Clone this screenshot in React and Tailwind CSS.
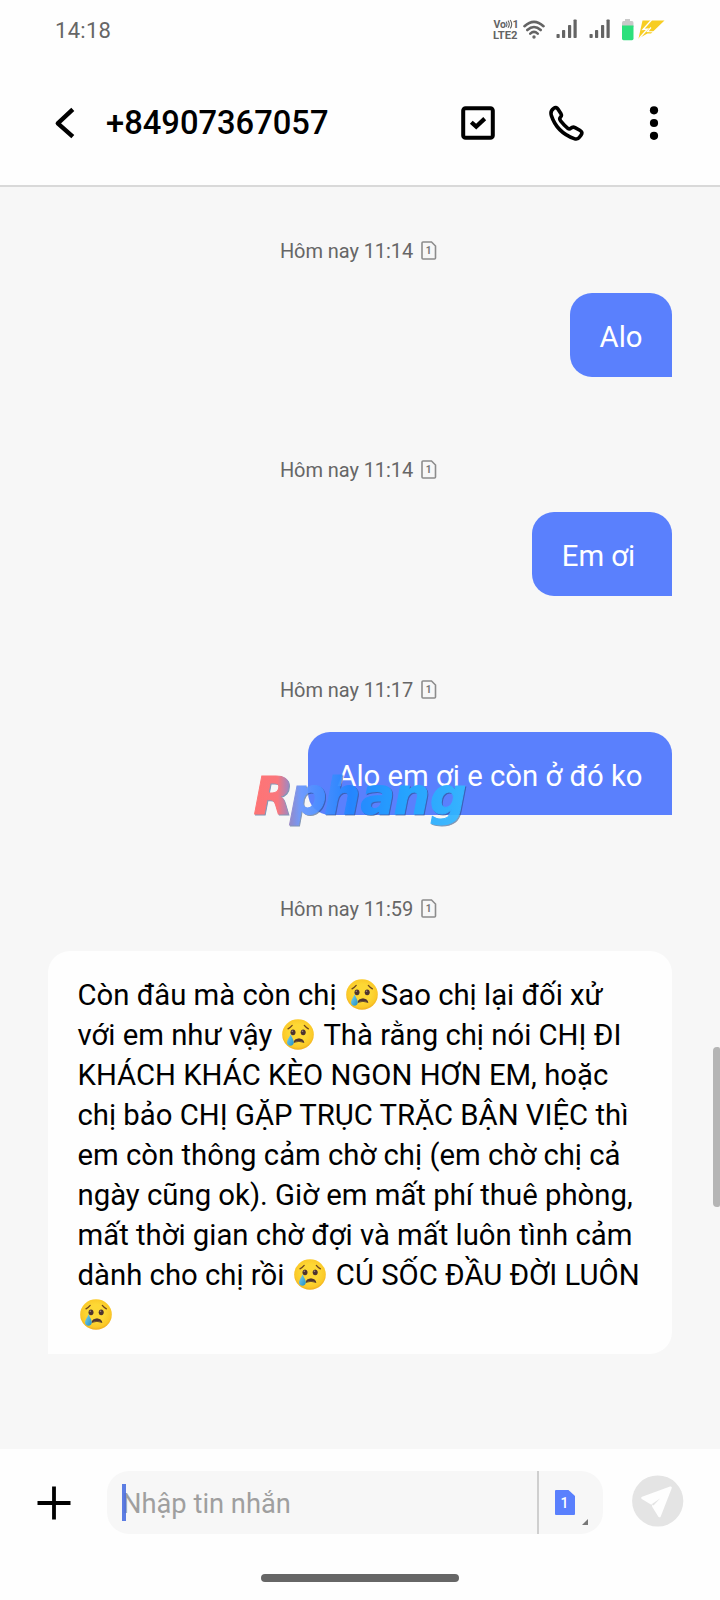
import React from 'react';

const messages = [
  { time: 'Hôm nay 11:14', text: 'Alo' },
  { time: 'Hôm nay 11:14', text: 'Em ơi ' },
  { time: 'Hôm nay 11:17', text: 'Alo em ơi e còn ở đó ko' },
];

const CryingFace = () => (
  <svg className="inline-block w-8 h-[31px] mx-[2.5px] align-[-5px]" viewBox="0 0 32 31" role="img" aria-label="😢">
    <defs>
      <radialGradient id="face" cx="0.5" cy="0.45" r="0.55">
        <stop offset="0.5" stopColor="#fdd835" />
        <stop offset="0.85" stopColor="#fbc928" />
        <stop offset="1" stopColor="#f0ad1c" />
      </radialGradient>
      <linearGradient id="tear" x1="0" y1="0" x2="1" y2="1">
        <stop offset="0" stopColor="#7fd4f2" />
        <stop offset="1" stopColor="#1f8fc4" />
      </linearGradient>
    </defs>
    <ellipse cx="16" cy="15.5" rx="15.8" ry="15.3" fill="url(#face)" />
    <ellipse cx="11" cy="13.3" rx="2.5" ry="2.9" fill="#4e342e" />
    <ellipse cx="21.2" cy="13.3" rx="2.5" ry="2.9" fill="#4e342e" />
    <circle cx="10.3" cy="12.2" r="0.8" fill="#a1887f" />
    <circle cx="20.5" cy="12.2" r="0.8" fill="#a1887f" />
    <path d="M6 9.8 Q8.5 8.6 10.2 6.4 M22.3 6.4 Q24 8.6 26.4 9.8" fill="none" stroke="#6d4520" strokeWidth="1.3" strokeLinecap="round" />
    <path d="M11.8 23.4 Q12.5 19.8 17 19.8 Q21.2 19.8 22 23.4 Q17 21.3 11.8 23.4Z" fill="#4e342e" stroke="#4e342e" strokeWidth="0.8" strokeLinejoin="round" />
    <path d="M8.6 15.2 C7.5 18.4 5 20.6 5 23.3 C5 25.5 6.4 26.8 8.4 26.8 C10.4 26.8 11.8 25.5 11.8 23.3 C11.8 20.6 9.8 18.4 8.6 15.2Z" fill="url(#tear)" />
  </svg>
);

const SimOutline = () => (
  <svg className="w-4 h-[19px] -mt-px" viewBox="0 0 16 19">
    <path d="M2 1 H10.5 L14.5 5 V17 Q14.5 18 13.5 18 H2 Q1 18 1 17 V2 Q1 1 2 1Z" fill="none" stroke="#8c8c8c" strokeWidth="1.6" />
    <text x="7.6" y="13" textAnchor="middle" fontSize="10" fontWeight="700" fill="#777">1</text>
  </svg>
);

const Timestamp = ({ children }) => (
  <div className="flex items-center justify-center h-7 gap-2 pr-[3px] text-[20px] text-[#666]">
    <span className="tracking-[-0.08px]">{children}</span>
    <SimOutline />
  </div>
);

const Signal = () => (
  <svg className="w-[22px] h-[20px]" viewBox="0 0 22 20" fill="#646464">
    <rect x="0.5" y="15" width="3.2" height="4" rx="0.8" />
    <rect x="6" y="11" width="3.2" height="8" rx="0.8" />
    <rect x="12" y="6" width="3.2" height="13" rx="0.8" />
    <rect x="17.5" y="0.5" width="3.2" height="18.5" rx="0.8" />
  </svg>
);

const StatusBar = () => (
  <div className="flex items-center justify-between h-[60px] pl-[55px] pr-[55px]">
    <span className="text-[22px] text-[#666] tracking-[0.3px]">14:18</span>
    <div className="flex items-center">
      <svg className="w-[26px] h-6 overflow-visible" viewBox="0 0 26 24" fill="#646464" fontWeight="700">
        <text x="0.5" y="9.8" fontSize="10.5" textLength="12.5">Vo</text>
        <path d="M13 3.7 Q15 6.2 13 9 M15 2.7 Q17.6 6.2 15 9.8 M17.2 2 Q20.2 6.2 17.2 10.4" fill="none" stroke="#646464" strokeWidth="1.1" />
        <text x="19.5" y="9.8" fontSize="11">1</text>
        <text x="0" y="20.5" fontSize="11" textLength="24.5" lengthAdjust="spacingAndGlyphs">LTE2</text>
      </svg>
      <svg className="ml-1 -mt-px w-[22px] h-5" viewBox="0 0 22 20" fill="none" stroke="#646464" strokeWidth="2.6" strokeLinecap="round">
        <path d="M1.5 6.2 Q11 -2.6 20.5 6.2 M4.3 10 Q11 4 17.7 10 M7.3 13.6 Q11 10.3 14.7 13.6" />
        <circle cx="11" cy="17" r="1.1" fill="#646464" strokeWidth="1.2" />
      </svg>
      <div className="flex ml-[11px] -mt-0.5 gap-[11px]">
        <Signal />
        <Signal />
      </div>
      <svg className="ml-[10px] -mt-0.5 w-[14px] h-[23px]" viewBox="0 0 14 23">
        <path d="M4 1 H9 V3 H11 Q12.5 3 12.5 5 V9 H1 V5 Q1 3 2.5 3 H4Z" fill="#c9c9c9" />
        <path d="M1 7.5 H12.5 V20.5 Q12.5 22.3 11 22.3 H2.5 Q1 22.3 1 20.5Z" fill="#2be07b" />
      </svg>
      <svg className="ml-[3px] -mt-0.5 w-[27px] h-[19px]" viewBox="0 0 27 19">
        <path d="M4.5 0.5 H26.5 L13 13.5 H9.5 L0.5 18.5Z" fill="#f7cd23" />
        <path d="M13.5 0 L5 9.5 L9.5 9 L1.5 18" fill="none" stroke="#fefefe" strokeWidth="1.3" />
        <path d="M18 12 L9.5 11.5 L13 7.5" fill="none" stroke="#fefefe" strokeWidth="1.2" />
      </svg>
    </div>
  </div>
);

const Header = () => (
  <header className="h-[187px] bg-[#fefefe] border-b-2 border-[#d9d9d9]">
    <StatusBar />
    <div className="flex items-center h-[126px] pl-[54px] pr-[61px]">
      <svg className="w-[22px] h-8" viewBox="0 0 22 32" fill="none" stroke="#000" strokeWidth="4.4" strokeLinejoin="round">
        <path d="M18.8 2.4 L3.8 16.3 L18.8 29.6" />
      </svg>
      <h1 className="ml-[30px] mt-px text-[32.7px] font-medium text-black leading-none">+84907367057</h1>
      <div className="flex items-center ml-auto">
        <svg className="w-[34px] h-[34px]" viewBox="0 0 34 34" fill="none" stroke="#000">
          <rect x="2.2" y="2.2" width="29.6" height="29.6" rx="2.4" strokeWidth="4" />
          <path d="M10.3 16.2 L15.2 20.6 L23.7 12.6" strokeWidth="4.2" />
        </svg>
        <svg className="ml-[53px] w-9 h-9" viewBox="0 0 36 36" fill="none" stroke="#000" strokeWidth="3.6" strokeLinejoin="round">
          <path d="M5.6 3.4 C7.3 2.2 8.9 2.4 9.9 4 L13 8.8 C13.8 10.2 13.6 11 12.6 12 C11.4 13.2 11.5 14.4 12.6 15.8 C14.8 18.6 17.2 21.1 19.8 23.3 C20.9 24.2 21.8 24.2 22.9 23.2 C24.2 22 25.4 21.8 27 22.6 L31.8 25.3 C34 26.6 34.4 28 33.2 29.9 L31.6 32 C30.2 34 28.4 34.4 26.2 33.6 C15.2 29.6 6.9 21.4 3.4 10.6 C2.4 7.4 3 5.2 5.6 3.4Z" />
        </svg>
        <svg className="ml-[65px] w-[10px] h-9" viewBox="0 0 10 36" fill="#000">
          <circle cx="5" cy="5.3" r="4.1" />
          <circle cx="5" cy="18" r="4.1" />
          <circle cx="5" cy="30.8" r="4.1" />
        </svg>
      </div>
    </div>
  </header>
);

const Watermark = () => (
  <svg className="absolute left-[250px] top-[581px] w-[224px] h-[62px]" viewBox="0 0 224 62">
    <defs>
      <linearGradient id="mark" gradientUnits="userSpaceOnUse" x1="4" y1="0" x2="218" y2="0">
        <stop offset="0" stopColor="#ff6b6b" />
        <stop offset="0.11" stopColor="#fb6d73" />
        <stop offset="0.17" stopColor="#8c83c8" />
        <stop offset="0.22" stopColor="#6495ff" />
        <stop offset="0.45" stopColor="#2186ff" />
        <stop offset="0.7" stopColor="#22a6ff" />
        <stop offset="1" stopColor="#35b8ff" />
      </linearGradient>
    </defs>
    <text
      x="3.5 40 74 110.5 143.5 180"
      y="46"
      className="drop-shadow-[1px_1.5px_0.5px_rgba(36,74,128,0.6)]"
      fontFamily="DejaVu Sans"
      fontWeight="700"
      fontStyle="italic"
      fontSize="51"
      fill="url(#mark)"
      stroke="url(#mark)"
      strokeWidth="1"
      opacity="0.93"
    >
      Rphang
    </text>
  </svg>
);

const Conversation = () => (
  <main className="relative h-[1262px] px-12 bg-[#f7f7f7]">
    {messages.map((message, index) => (
      <section key={index} className="flex flex-col h-[219.33px] pt-[50px]">
        <Timestamp>{message.time}</Timestamp>
        <div className="self-end mt-7 h-[83.5px] px-[29.5px] pt-6 rounded-[22px] rounded-br-none bg-[#5a80fd] text-[29.3px] leading-10 text-white whitespace-pre">
          {message.text}
        </div>
      </section>
    ))}
    <section className="flex flex-col pt-[50px]">
      <Timestamp>Hôm nay 11:59</Timestamp>
      <p className="mt-7 h-[403px] pl-[29.5px] pt-6 rounded-[22px] rounded-bl-none bg-[#fefefe] text-[29.3px] leading-10 text-black whitespace-nowrap">
        Còn đâu mà còn chị <CryingFace />Sao chị lại đối xử<br />
        với em như vậy <CryingFace /> Thà rằng chị nói CHỊ ĐI<br />
        KHÁCH KHÁC KÈO NGON HƠN EM, hoặc<br />
        chị bảo CHỊ GẶP TRỤC TRẶC BẬN VIỆC thì<br />
        em còn thông cảm chờ chị (em chờ chị cả<br />
        ngày cũng ok). Giờ em mất phí thuê phòng,<br />
        mất thời gian chờ đợi và mất luôn tình cảm<br />
        dành cho chị rồi <CryingFace /> CÚ SỐC ĐẦU ĐỜI LUÔN<br />
        <CryingFace />
      </p>
    </section>
    <Watermark />
    {/* Scroll thumb */}
    <div className="absolute right-0 top-[860px] w-[7px] h-[160px] rounded-l-[4px] rounded-r-[2px] bg-[#b5b5b5]" />
  </main>
);

const Composer = () => (
  <footer className="h-[151px] pt-[22px] bg-[#fefefe]">
    <div className="flex items-center h-[63px] pl-[37px]">
      <svg className="w-[34px] h-[34px]" viewBox="0 0 34 34" stroke="#000" strokeWidth="3.8">
        <path d="M17 0.5 V33.5 M0.5 17 H33.5" />
      </svg>
      <div className="flex ml-9 w-[496px] h-[63px] rounded-[22px] bg-[#f7f7f7]">
        <div className="relative flex items-center w-[432px] pl-[15px] pt-1 border-r-2 border-[#cfcfcf] text-[27.3px] text-[#9f9f9f]">
          Nhập tin nhắn
          <span className="absolute left-[15px] top-[13px] w-1 h-[37px] bg-[#4a6fe0]/90" />
        </div>
        <div className="relative flex-1">
          <svg className="mt-[19px] ml-4 w-5 h-[25px]" viewBox="0 0 20 25">
            <path d="M1 0 H13.5 L20 6 V24 Q20 25 19 25 H1 Q0 25 0 24 V1 Q0 0 1 0Z" fill="#5a80fd" />
            <text x="9.5" y="18" textAnchor="middle" fontSize="14" fontWeight="500" fill="#fff">1</text>
          </svg>
          <svg className="absolute left-[43px] top-[48px] w-[6px] h-[6px]" viewBox="0 0 6 6">
            <path d="M6 0 V6 H0Z" fill="#777" />
          </svg>
        </div>
      </div>
      <svg className="ml-[29px] -mt-1 w-[52px] h-[52px]" viewBox="0 0 52 52">
        <circle cx="25.7" cy="26" r="25.6" fill="#e4e4e4" />
        <path d="M10.5 23 L38.5 12.8 L27.5 41 L21.3 31 L28 24 L19.5 28.3Z" fill="#fefefe" stroke="#fefefe" strokeWidth="2.6" strokeLinejoin="round" />
        <path d="M20 29 L28 23.6 L21.5 30.5" fill="#e4e4e4" />
      </svg>
    </div>
    <div className="mx-auto mt-[40px] w-[198px] h-2 rounded-full bg-[#666]" />
  </footer>
);

const App = () => {
  return (
    <div className="w-[720px] h-[1600px] overflow-hidden bg-[#fefefe] font-[Roboto,'Noto_Sans',sans-serif]">
      <Header />
      <Conversation />
      <Composer />
    </div>
  );
};

export default App;
